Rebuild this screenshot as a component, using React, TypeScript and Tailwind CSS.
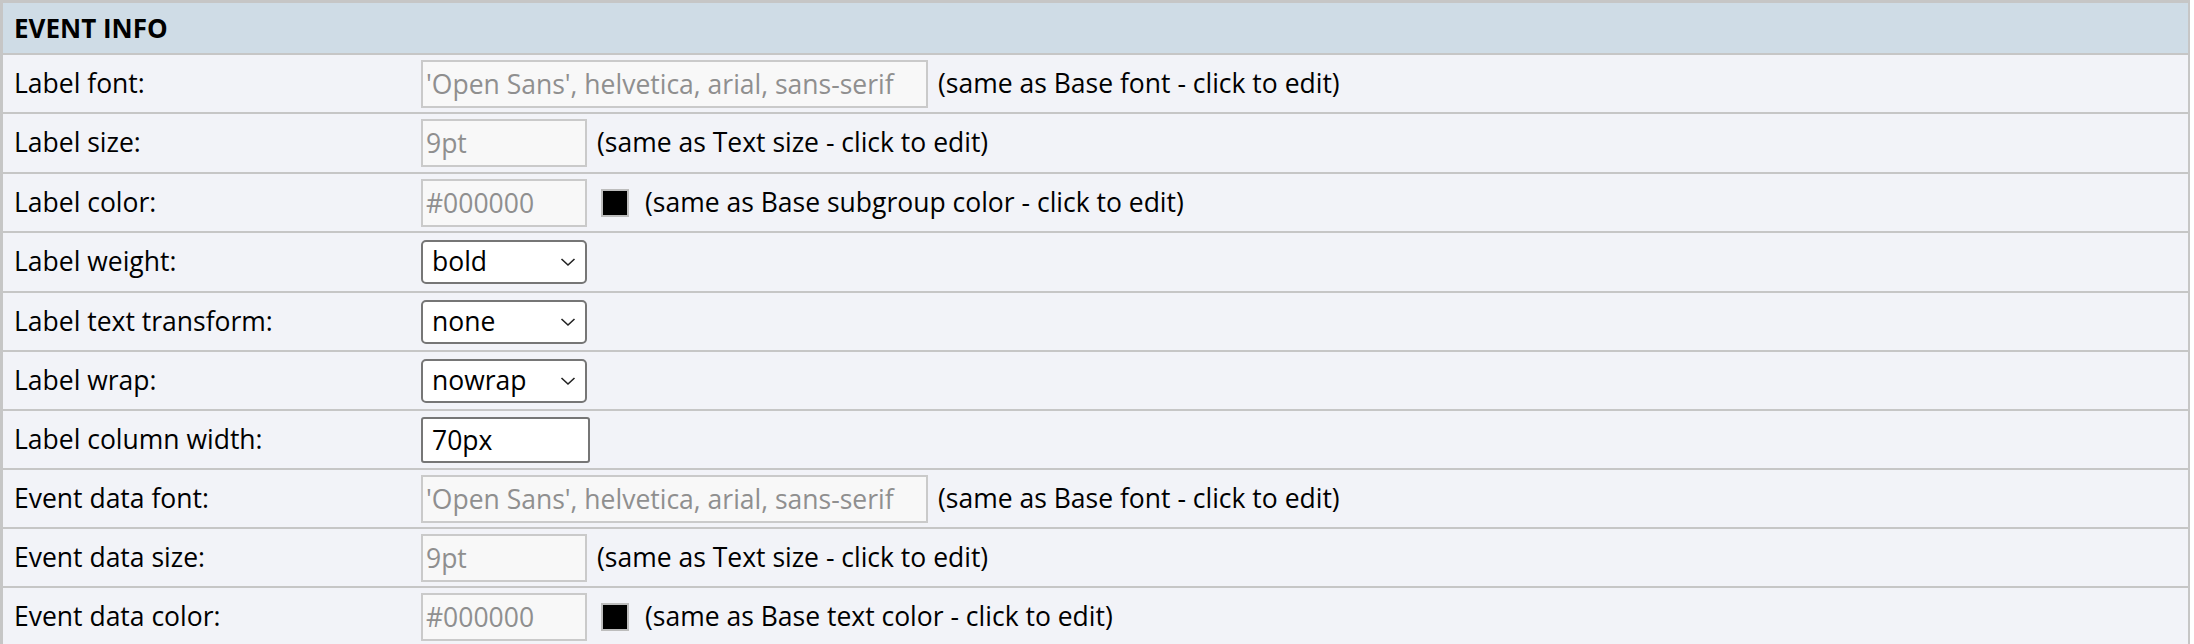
import React from 'react';

type Row =
  | { label: string; kind: 'inherit'; value: string; wide?: boolean; note: string; swatch?: string }
  | { label: string; kind: 'select'; value: string; options: string[] }
  | { label: string; kind: 'text'; value: string };

const rows: { row: Row; h: string }[] = [
  { row: { label: 'Label font:', kind: 'inherit', value: "'Open Sans', helvetica, arial, sans-serif", wide: true, note: '(same as Base font - click to edit)' }, h: 'h-[57px]' },
  { row: { label: 'Label size:', kind: 'inherit', value: '9pt', note: '(same as Text size - click to edit)' }, h: 'h-[58px]' },
  { row: { label: 'Label color:', kind: 'inherit', value: '#000000', note: '(same as Base subgroup color - click to edit)', swatch: '#000000' }, h: 'h-[57px]' },
  { row: { label: 'Label weight:', kind: 'select', value: 'bold', options: ['normal', 'bold'] }, h: 'h-[58px]' },
  { row: { label: 'Label text transform:', kind: 'select', value: 'none', options: ['none', 'uppercase', 'lowercase', 'capitalize'] }, h: 'h-[57px]' },
  { row: { label: 'Label wrap:', kind: 'select', value: 'nowrap', options: ['wrap', 'nowrap'] }, h: 'h-[57px]' },
  { row: { label: 'Label column width:', kind: 'text', value: '70px' }, h: 'h-[57px]' },
  { row: { label: 'Event data font:', kind: 'inherit', value: "'Open Sans', helvetica, arial, sans-serif", wide: true, note: '(same as Base font - click to edit)' }, h: 'h-[57px]' },
  { row: { label: 'Event data size:', kind: 'inherit', value: '9pt', note: '(same as Text size - click to edit)' }, h: 'h-[57px]' },
  { row: { label: 'Event data color:', kind: 'inherit', value: '#000000', note: '(same as Base text color - click to edit)', swatch: '#000000' }, h: 'h-[58px]' },
];

const Chevron = () => (
  <svg className="pointer-events-none absolute right-[11px] top-1/2 -translate-y-1/2" width="16" height="10" viewBox="0 0 16 10" fill="none">
    <path d="M1.5 2 L8 8 L14.5 2" stroke="#222" strokeWidth="1.6" />
  </svg>
);

const Field: React.FC<{ row: Row }> = ({ row }) => {
  if (row.kind === 'select') {
    return (
      <div className="relative">
        <select
          defaultValue={row.value}
          className="appearance-none w-[166px] h-[44px] bg-white border-2 border-[#767676] rounded-[5px] pl-[9px] text-[26.5px] text-black outline-none"
        >
          {row.options.map((o) => (
            <option key={o} value={o}>{o}</option>
          ))}
        </select>
        <Chevron />
      </div>
    );
  }
  if (row.kind === 'text') {
    return (
      <input
        type="text"
        defaultValue={row.value}
        className="w-[169px] h-[46px] bg-white border-2 border-[#767676] rounded-[3px] pl-[9px] text-[26.5px] text-black outline-none"
      />
    );
  }
  return (
    <div className="flex items-center">
      <input
        type="text"
        readOnly
        value={row.value}
        className={`${row.wide ? 'w-[507px]' : 'w-[166px]'} h-[48px] bg-[#f8f8f8] border-2 border-[#cacaca] pl-[3px] text-[26.5px] text-[#8f8f8f] outline-none`}
      />
      {row.swatch && (
        <span className="ml-[14px] w-[28px] h-[28px] border-2 border-[#bdbdbd] bg-black" />
      )}
      <span className={`${row.swatch ? 'ml-[16px]' : 'ml-[10px]'} text-black whitespace-nowrap`}>{row.note}</span>
    </div>
  );
};

export default function App() {
  return (
    <div className="bg-white w-[2194px] h-[644px] overflow-hidden" style={{ fontFamily: "'Open Sans', 'Liberation Sans', sans-serif" }}>
      <div className="w-[2190px] border-t-[3px] border-l-[3px] border-r-[2px] border-[#c6c6c6] text-[26.5px] text-black">
        <div className="h-[50px] bg-[#cfdce6] flex items-center pl-[11px] font-bold uppercase text-[26px]">Event info</div>
        {rows.map(({ row, h }) => (
          <div key={row.label} className={`${h} box-content border-t-2 border-[#c6c6c6] bg-[#f2f3f8] flex items-center`}>
            <div className="w-[418px] pl-[11px] whitespace-nowrap">{row.label}</div>
            <Field row={row} />
          </div>
        ))}
      </div>
    </div>
  );
}
